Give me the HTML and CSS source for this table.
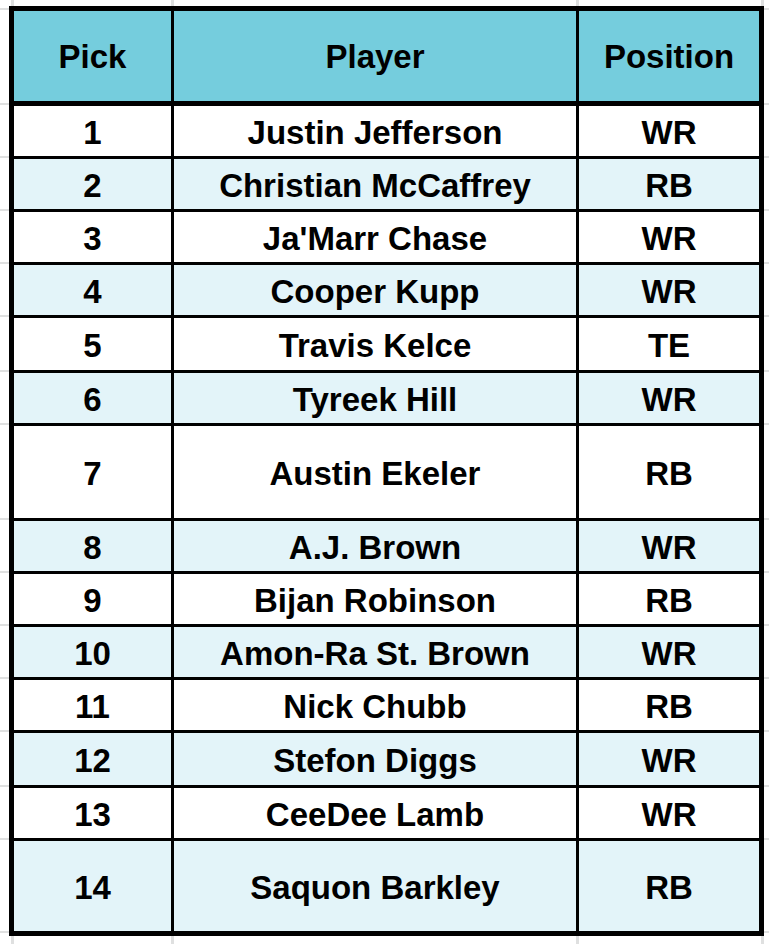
FILE: index.html
```html
<!DOCTYPE html>
<html lang="en">
<head>
<meta charset="utf-8">
<title>Draft Picks</title>
<link rel="stylesheet" href="styles.css">
</head>
<body>
<div class="sheet">
  <div class="row edge">
    <div class="g"></div><div class="s s1"></div><div class="s s2"></div><div class="s s3"></div><div class="g"></div>
  </div>
  <div class="row head">
    <div class="g gh"></div>
    <div class="c pick">Pick</div>
    <div class="c player">Player</div>
    <div class="c pos">Position</div>
    <div class="g gh"></div>
  </div>
  <div class="row">
    <div class="g"></div><div class="c pick">1</div><div class="c player">Justin Jefferson</div><div class="c pos">WR</div><div class="g"></div>
  </div>
  <div class="row alt">
    <div class="g"></div><div class="c pick">2</div><div class="c player">Christian McCaffrey</div><div class="c pos">RB</div><div class="g"></div>
  </div>
  <div class="row">
    <div class="g"></div><div class="c pick">3</div><div class="c player">Ja'Marr Chase</div><div class="c pos">WR</div><div class="g"></div>
  </div>
  <div class="row alt">
    <div class="g"></div><div class="c pick">4</div><div class="c player">Cooper Kupp</div><div class="c pos">WR</div><div class="g"></div>
  </div>
  <div class="row mid">
    <div class="g"></div><div class="c pick">5</div><div class="c player">Travis Kelce</div><div class="c pos">TE</div><div class="g"></div>
  </div>
  <div class="row alt">
    <div class="g"></div><div class="c pick">6</div><div class="c player">Tyreek Hill</div><div class="c pos">WR</div><div class="g"></div>
  </div>
  <div class="row tall">
    <div class="g"></div><div class="c pick">7</div><div class="c player">Austin Ekeler</div><div class="c pos">RB</div><div class="g"></div>
  </div>
  <div class="row alt">
    <div class="g"></div><div class="c pick">8</div><div class="c player">A.J. Brown</div><div class="c pos">WR</div><div class="g"></div>
  </div>
  <div class="row">
    <div class="g"></div><div class="c pick">9</div><div class="c player">Bijan Robinson</div><div class="c pos">RB</div><div class="g"></div>
  </div>
  <div class="row alt">
    <div class="g"></div><div class="c pick">10</div><div class="c player">Amon-Ra St. Brown</div><div class="c pos">WR</div><div class="g"></div>
  </div>
  <div class="row">
    <div class="g"></div><div class="c pick">11</div><div class="c player">Nick Chubb</div><div class="c pos">RB</div><div class="g"></div>
  </div>
  <div class="row alt mid">
    <div class="g"></div><div class="c pick">12</div><div class="c player">Stefon Diggs</div><div class="c pos">WR</div><div class="g"></div>
  </div>
  <div class="row">
    <div class="g"></div><div class="c pick">13</div><div class="c player">CeeDee Lamb</div><div class="c pos">WR</div><div class="g"></div>
  </div>
  <div class="row alt last">
    <div class="g"></div><div class="c pick">14</div><div class="c player">Saquon Barkley</div><div class="c pos">RB</div><div class="g"></div>
  </div>
  <div class="row edge bottom">
    <div class="g"></div><div class="s s1"></div><div class="s s2"></div><div class="s s3"></div><div class="g"></div>
  </div>
</div>
</body>
</html>
```
FILE: styles.css
```css
* { box-sizing: border-box; }
html, body { margin: 0; padding: 0; background: #ffffff; }
body {
  width: 769px;
  height: 944px;
  overflow: hidden;
  font-family: "Liberation Sans", Arial, Helvetica, sans-serif;
  font-weight: bold;
  font-size: 33px;
  color: #000;
}
.sheet { display: flex; flex-direction: column; }
.row {
  display: grid;
  grid-template-columns: 9px 162px 405px 188px 5px;
  height: 53px;
}
.row.mid { height: 55px; }
.row.tall { height: 95px; }
.row.last { height: 95px; }
.row.head { height: 100px; }
.row.edge { height: 6px; }
.row.edge.bottom { height: 8px; }

.g {
  background: linear-gradient(#dfe0e0, #dfe0e0) 0 calc(100% - 1px) / 100% 2px no-repeat;
}
.row.edge .g { background: none; }
.g.gh {
  background:
    linear-gradient(#dfe0e0, #dfe0e0) 0 2px / 100% 2px no-repeat,
    linear-gradient(#dfe0e0, #dfe0e0) 0 97px / 100% 2px no-repeat;
}
.row.last .g {
  background: linear-gradient(#dfe0e0, #dfe0e0) 0 calc(100% - 3px) / 100% 2px no-repeat;
}
.s1 { background: linear-gradient(#dfe0e0, #dfe0e0) 2px 0 / 3px 100% no-repeat; }
.s2 { background: linear-gradient(#dfe0e0, #dfe0e0) 0 0 / 3px 100% no-repeat; }
.s3 {
  background:
    linear-gradient(#dfe0e0, #dfe0e0) 0 0 / 3px 100% no-repeat,
    linear-gradient(#dfe0e0, #dfe0e0) right 0 top 0 / 3px 100% no-repeat;
}

.c {
  display: flex;
  align-items: center;
  justify-content: center;
  background: #ffffff;
  border-bottom: 3px solid #000;
  white-space: nowrap;
  padding-top: 3px;
}
.row.alt .c { background: #e3f4f9; }
.c.pick { border-left: 5px solid #000; }
.c.player { border-left: 3px solid #000; }
.c.pos { border-left: 3px solid #000; border-right: 5px solid #000; }
.row.head .c {
  background: #75cddd;
  border-top: 5px solid #000;
  border-bottom: 5px solid #000;
  padding-top: 2px;
}
.row.last .c { border-bottom: 5px solid #000; }
```
